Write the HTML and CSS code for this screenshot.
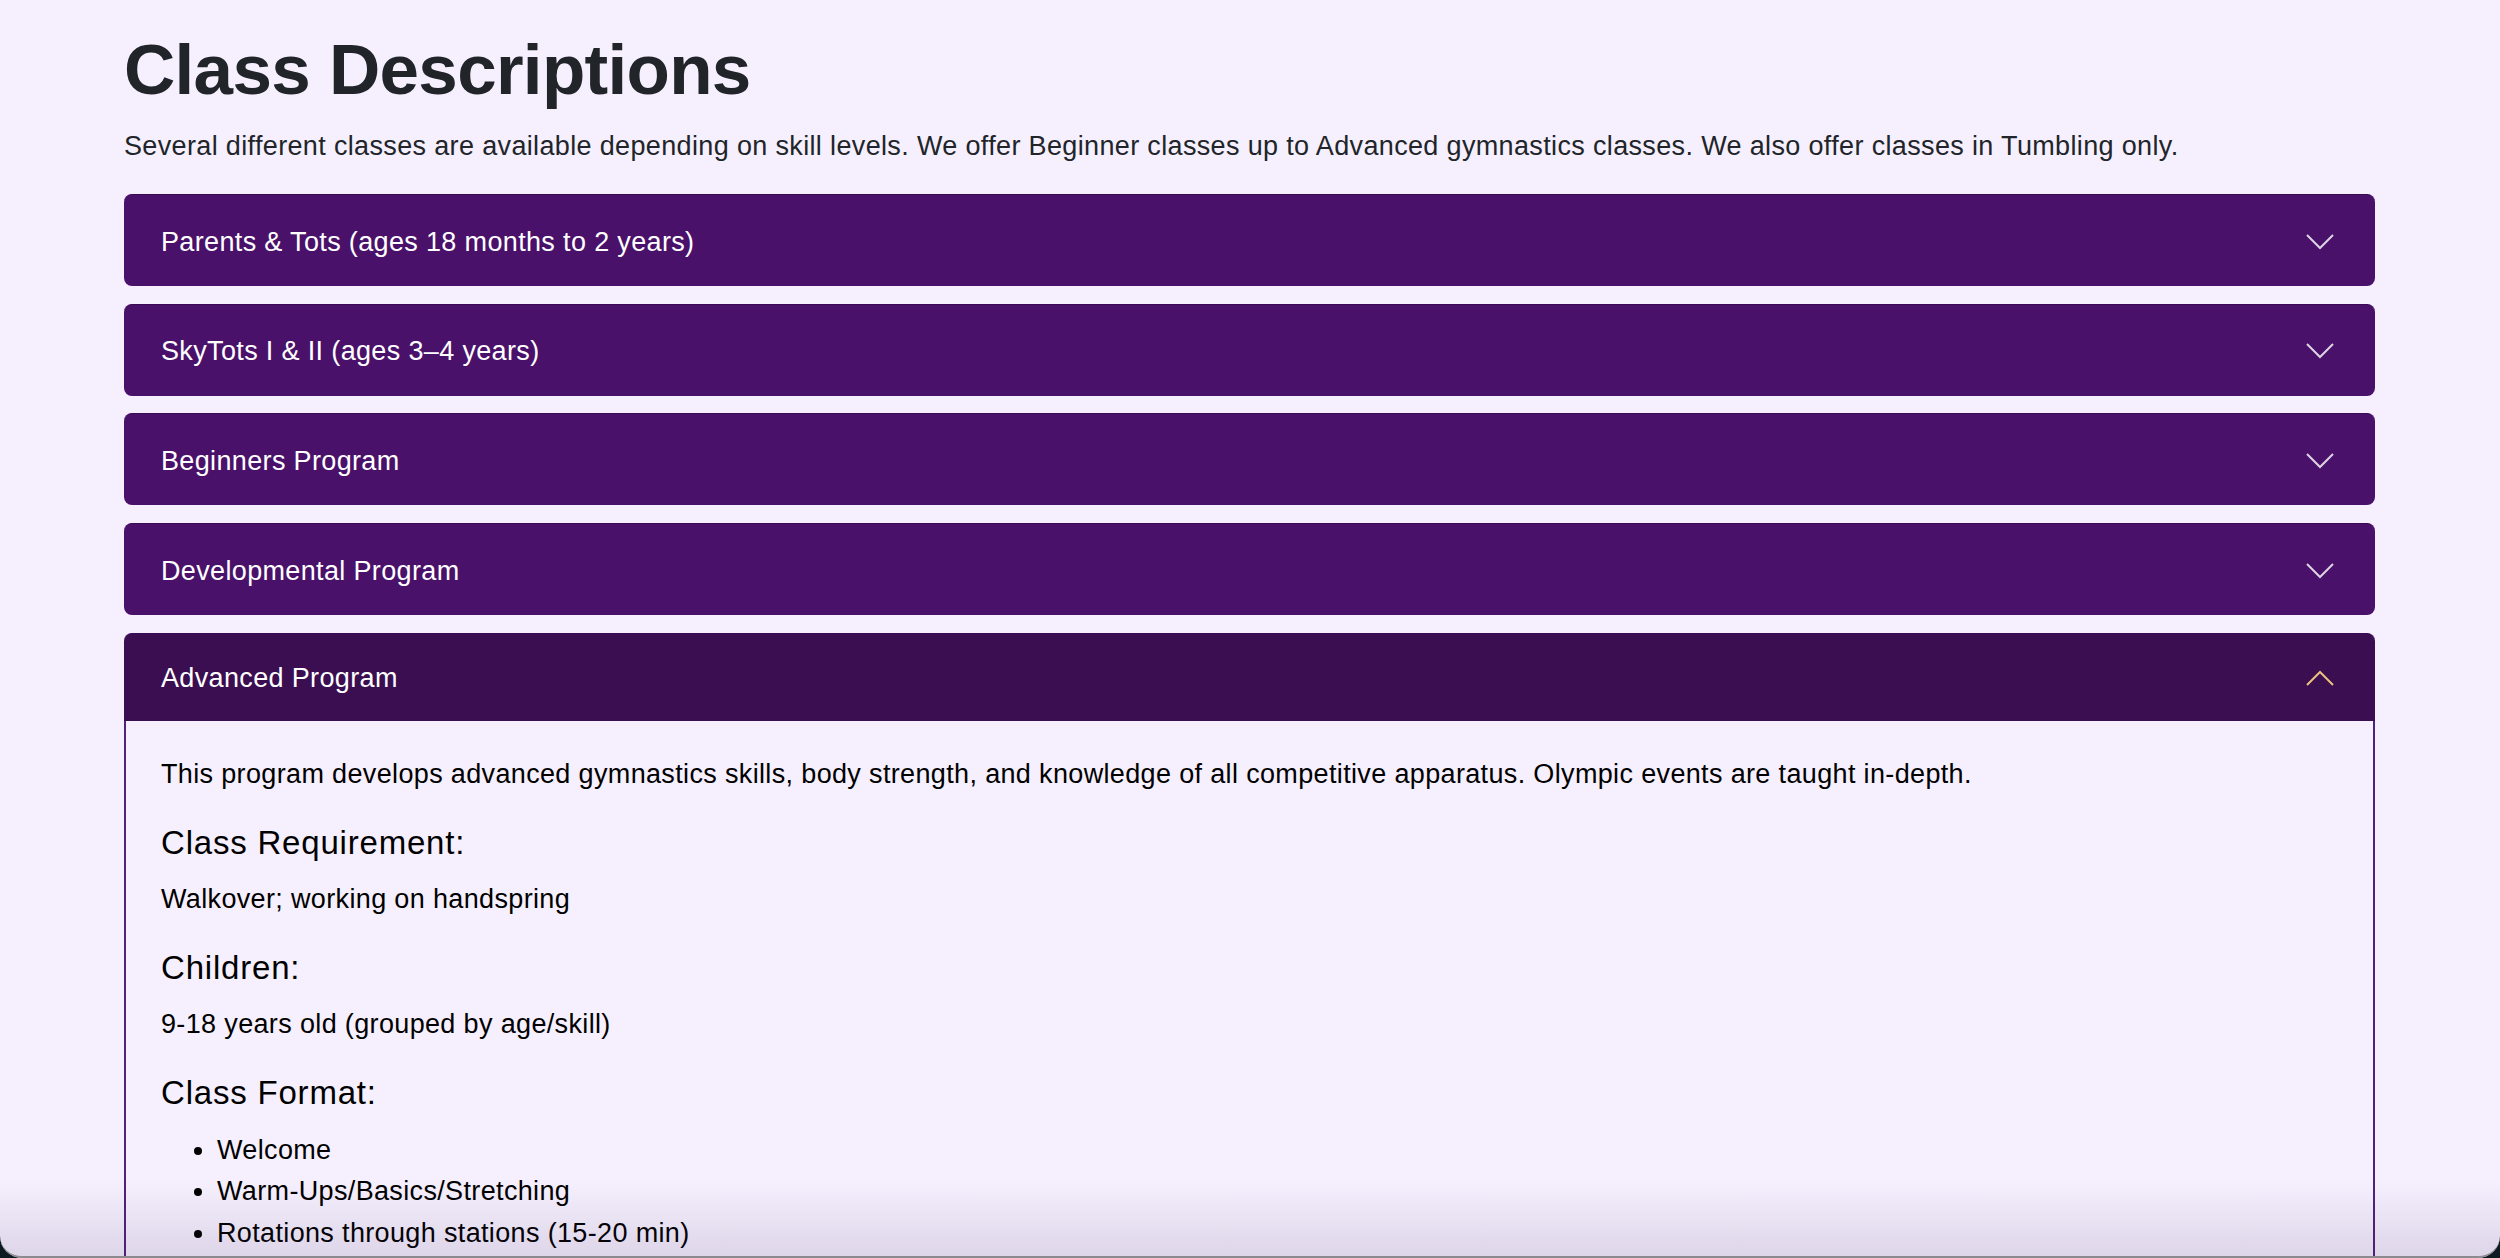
FILE: index.html
```html
<!DOCTYPE html>
<html lang="en">
<head>
<meta charset="utf-8">
<title>Class Descriptions</title>
<link rel="stylesheet" href="styles.css">
</head>
<body>
<main class="container">
  <h1 class="title">Class Descriptions</h1>
  <p class="lead">Several different classes are available depending on skill levels. We offer Beginner classes up to Advanced gymnastics classes. We also offer classes in Tumbling only.</p>

  <div class="accordion">
    <div class="item">
      <div class="head">
        <span>Parents &amp; Tots (ages 18 months to 2 years)</span>
        <svg class="chev" viewBox="0 0 28 16" width="28" height="16"><polyline points="1,1 14,14 27,1"/></svg>
      </div>
    </div>
    <div class="item">
      <div class="head">
        <span>SkyTots I &amp; II (ages 3–4 years)</span>
        <svg class="chev" viewBox="0 0 28 16" width="28" height="16"><polyline points="1,1 14,14 27,1"/></svg>
      </div>
    </div>
    <div class="item">
      <div class="head">
        <span>Beginners Program</span>
        <svg class="chev" viewBox="0 0 28 16" width="28" height="16"><polyline points="1,1 14,14 27,1"/></svg>
      </div>
    </div>
    <div class="item">
      <div class="head">
        <span>Developmental Program</span>
        <svg class="chev" viewBox="0 0 28 16" width="28" height="16"><polyline points="1,1 14,14 27,1"/></svg>
      </div>
    </div>
    <div class="item open">
      <div class="head">
        <span>Advanced Program</span>
        <svg class="chev up" viewBox="0 0 28 16" width="28" height="16"><polyline points="1,15 14,2 27,15"/></svg>
      </div>
      <div class="body">
        <p>This program develops advanced gymnastics skills, body strength, and knowledge of all competitive apparatus. Olympic events are taught in-depth.</p>
        <h5>Class Requirement:</h5>
        <p>Walkover; working on handspring</p>
        <h5>Children:</h5>
        <p>9-18 years old (grouped by age/skill)</p>
        <h5>Class Format:</h5>
        <ul>
          <li>Welcome</li>
          <li>Warm-Ups/Basics/Stretching</li>
          <li>Rotations through stations (15-20 min)</li>
        </ul>
      </div>
    </div>
  </div>
</main>
<div class="frame"></div>
</body>
</html>
```
FILE: styles.css
```css
html, body {
  margin: 0;
  padding: 0;
  height: 100%;
  overflow: hidden;
}
body {
  background: #f6f0fe;
  font-family: "Liberation Sans", Arial, Helvetica, sans-serif;
  color: #212529;
}
.container {
  margin-left: 124px;
  width: 2251px;
  padding-top: 27px;
}
.title {
  margin: 0;
  font-size: 71px;
  line-height: 85px;
  font-weight: 700;
  color: #212529;
  letter-spacing: -0.7px;
}
.lead {
  margin: 15px 0 0;
  font-size: 27px;
  line-height: 38px;
  letter-spacing: 0.35px;
  color: #212529;
}
.accordion {
  margin-top: 29px;
}
.item {
  margin-bottom: 17.7px;
}
.head {
  height: 92px;
  box-sizing: border-box;
  display: flex;
  align-items: center;
  justify-content: space-between;
  padding: 2px 41px 0 37px;
  background: #4a116a;
  color: #ffffff;
  font-size: 27px;
  line-height: 30px;
  letter-spacing: 0.35px;
  border-radius: 8px;
  border-top: 1px solid #3a0a55;
}
.chev {
  display: block;
  fill: none;
  stroke: #ddd5e4;
  stroke-width: 2;
}
.chev.up {
  stroke: #e9c27c;
}
.open .head {
  height: 88px;
  background: #3b0d51;
  border-radius: 8px 8px 0 0;
}
.body {
  border: 2px solid #52217a;
  border-top: none;
  padding: 34px 35px 40px;
  color: #000000;
}
.body p {
  margin: 0 0 31px;
  font-size: 27px;
  line-height: 38px;
  letter-spacing: 0.35px;
}
.body h5 {
  margin: 0 0 18px;
  font-size: 33px;
  line-height: 38px;
  letter-spacing: 0.8px;
  font-weight: 400;
}
.body ul {
  margin: 9px 0 0;
  padding-left: 56px;
  font-size: 27px;
  line-height: 41.5px;
  letter-spacing: 0.35px;
}
.frame {
  position: fixed;
  left: 0;
  right: 0;
  top: 0;
  bottom: 0;
  pointer-events: none;
  border-radius: 0 0 22px 22px;
  box-shadow: 0 0 0 40px #0d1a22;
  background: linear-gradient(to bottom, rgba(60, 40, 90, 0) 1180px, rgba(60, 40, 90, 0.13) 1256px);
  border-bottom: 2px solid #8c8a8e;
}
```
